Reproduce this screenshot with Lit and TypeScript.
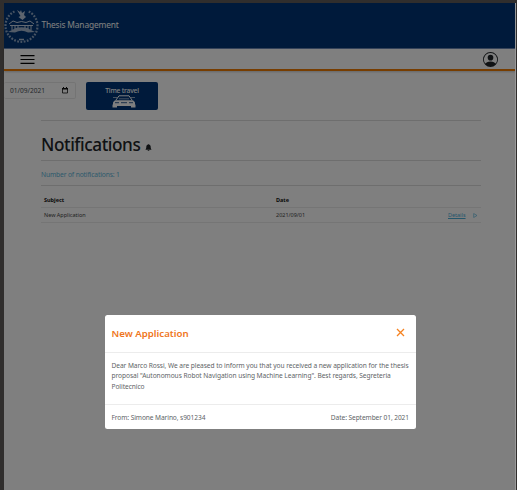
import { LitElement, html, css } from "lit";
import { customElement } from "lit/decorators.js";

@customElement("app-root")
class AppRoot extends LitElement {
  static styles = css`
    :host { display: block; height: 490px; width: 517px; overflow: hidden; box-sizing: border-box; background: #302e2d; padding: 3px 1px 0 4px; font-family: "Noto Sans", sans-serif; position: relative; }
    * { box-sizing: border-box; }
    svg { display: block; }
    .page { position: relative; height: 487px; background: #fff; }
    .brand { height: 45px; background: #003576; display: flex; align-items: center; color: #fff; font-size: 8.4px; letter-spacing: -0.15px; }
    .brand p { margin: 0 0 2px 2.5px; }
    .bar { height: 23px; border-top: 1px solid #6b87b4; border-bottom: 2px solid #ef7b00; display: flex; justify-content: space-between; align-items: center; padding: 0 18px 0 16px; box-shadow: 0 1px 2px #0003; }
    .bar svg:last-child { margin-top: 1px; }
    .tools { display: flex; height: 49px; padding-top: 11px; align-items: flex-start; }
    .date { width: 72px; height: 17px; border: 1px solid #e9e9e9; border-left: 0; border-radius: 2px; display: flex; align-items: center; justify-content: space-between; padding: 0 7px 0 6px; font-size: 6.6px; color: #495057; }
    .travel { margin-left: 10px; width: 72px; height: 28px; background: #003576; border-radius: 2px; color: #fff; font-size: 6.7px; letter-spacing: -0.2px; font-weight: 500; line-height: 9px; padding-top: 4px; display: flex; flex-direction: column; align-items: center; }
    .travel svg { margin-left: 4px; }
    main { margin: 0 35px 0 37px; border-top: 1px solid #dcdcdc; }
    .title { height: 39px; display: flex; align-items: center; }
    h1 { font-size: 17.2px; letter-spacing: -0.43px; font-weight: 500; margin: 9px 5px 0 0; line-height: 24px; color: #212529; }
    .bell { margin-top: 14px; }
    .count { border-top: 1px solid #dcdcdc; border-bottom: 1px solid #dcdcdc; height: 26px; display: flex; align-items: center; color: #5bb5d9; font-size: 6.7px; letter-spacing: -0.13px; padding-top: 2px; }
    .row { display: grid; grid-template-columns: 232px 172px 1fr; font-size: 5.5px; color: #444; height: 16px; align-items: center; padding-left: 3px; border-bottom: 1px solid #eaeaea; letter-spacing: -0.02px; }
    .head { margin-top: 6px; font-weight: 700; color: #111; }
    .head + .row { height: 15px; }
    .links { display: flex; align-items: center; gap: 7px; color: #4aaed9; }
    .links u { text-decoration-thickness: .6px; }
    .shade { position: absolute; inset: 0; right: 1px; background: rgba(0,0,0,.5); }
    .edge { position: absolute; right: 0; top: 0; bottom: 0; width: 1px; background: #999; }
    .modal { position: absolute; left: 105px; top: 315px; width: 311px; height: 114px; background: #fff; border-radius: 2.5px; color: #606366; font-size: 6.6px; letter-spacing: -0.052px; }
    .mhead { height: 37px; display: flex; justify-content: space-between; align-items: center; padding: 0 11px 0 6.5px; color: #ef7622; font-size: 9.7px; letter-spacing: 0; font-weight: 600; }
    .mhead svg { margin-bottom: 2px; }
    .mbody { height: 53px; border-top: 1px solid #ececec; border-bottom: 1px solid #ececec; padding: 8px 0 0 6.5px; line-height: 10.3px; }
    .mbody div { white-space: nowrap; }
    .foot { height: 24px; display: flex; justify-content: space-between; align-items: center; padding: 1px 7px 0 6.5px; letter-spacing: -0.08px; }
  `;

  lines = [
    "Dear Marco Rossi, We are pleased to inform you that you received a new application for the thesis",
    "proposal \"Autonomous Robot Navigation using Machine Learning\". Best regards, Segreteria",
    "Politecnico",
  ];

  crest() {
    return html`<svg width="35" height="35" viewBox="0 0 35 35" fill="none" stroke="#dce3ee">
      <path d="M10.5 3.4A16 16 0 1 0 24.5 3.4" stroke-width="2.200" stroke-dasharray="1.800 1.400" opacity=".65" />
      <path d="M13 2l3 2 1-2 1 3 3-2-1 4 2 2-3.500 3-4-3 2-1z" fill="#dce3ee" stroke="none" opacity=".85" />
      <path d="M5 16l4-3 4 1.500 4.500-1 4.500 1 4-1.500 4 3M6 17.500h23M8 18v4M11 18v3M14 18v2M21 18v2M24 18v3M27 18v4" stroke-width="1" opacity=".9" />
      <path d="M4 24l8-4q5.500-1.500 11 0l8 4-7 .5q-6.500-3.500-13 0z" fill="#dce3ee" stroke="none" opacity=".75" />
      <path d="M15 31.500h5" stroke-width="1.500" opacity=".8" />
    </svg>`;
  }

  render() {
    return html`
      <div class="page">
        <div class="brand">${this.crest()}<p>Thesis Management</p></div>
        <div class="bar">
          <svg width="15" height="9" viewBox="0 0 15 9" stroke="#000" stroke-width="1.200"><path d="M.5 .7h14M.5 4.500h14M.5 8.300h14" /></svg>
          <svg width="15" height="15" viewBox="0 0 16 16" fill="#212529">
            <path d="M11 6a3 3 0 1 1-6 0 3 3 0 0 1 6 0z" />
            <path fill-rule="evenodd" d="M0 8a8 8 0 1 1 16 0A8 8 0 0 1 0 8zm8-7a7 7 0 0 0-5.468 11.370C3.242 11.226 4.805 10 8 10s4.757 1.225 5.468 2.370A7 7 0 0 0 8 1z" />
          </svg>
        </div>
        <div class="tools">
          <div class="date">01/09/2021
            <svg width="6" height="7" viewBox="0 0 6 7"><path d="M.5 1.500h5v4.500h-5z" fill="none" stroke="#111" stroke-width=".8" /><path d="M0 1h6v1.500H0zM1 0h1v1H1zM4 0h1v1H4z" fill="#111" /></svg>
          </div>
          <div class="travel">Time travel
            <svg width="24" height="13" viewBox="0 0 24 13" fill="none" stroke="#fff">
              <path d="M4 5l3-4.200h10l3 4.200" stroke-width="1" />
              <path d="M1 2.500h4M19 2.500h4M7 3.800h10" stroke-width=".8" opacity=".7" />
              <path d="M3 5.200h18l2 2V10H1V7.200z" fill="#fff" stroke="none" />
              <path d="M3 7.700h4M17 7.700h4M9 7.700h6" stroke="#003576" stroke-width=".8" />
              <path d="M.5 9.500v3H5v-1.500h14v1.500h4.500v-3z" fill="#fff" stroke="none" />
            </svg>
          </div>
        </div>
        <main>
          <div class="title"><h1>Notifications</h1>
            <svg class="bell" width="7" height="7" viewBox="0 0 16 16" fill="#212529"><path d="M8 16a2 2 0 0 0 2-2H6a2 2 0 0 0 2 2zM8 0a1 1 0 0 0-1 1C4.700 1.500 3 3.500 3 6c0 2-.5 5-2 7h14c-1.500-2-2-5-2-7 0-2.500-1.700-4.500-4-5a1 1 0 0 0-1-1z" /></svg>
          </div>
          <div class="count">Number of notifications: 1</div>
          <div class="row head"><span>Subject</span><span>Date</span></div>
          <div class="row"><span>New Application</span><span>2021/09/01</span>
            <span class="links"><u>Details</u><svg width="5" height="5" viewBox="0 0 5 5" fill="none" stroke="#4aaed9" stroke-width=".6"><path d="M.7 .5l3.300 2-3.300 2z" /></svg></span>
          </div>
        </main>
        <div class="shade"></div>
        <div class="edge"></div>
      </div>
      <section class="modal">
        <div class="mhead"><span>New Application</span><svg width="9" height="9" viewBox="0 0 9 9" stroke="#f58220" stroke-width="1.300"><path d="M1 1l7 7M8 1l-7 7" /></svg></div>
        <div class="mbody">${this.lines.map((l) => html`<div>${l}</div>`)}</div>
        <div class="foot"><span>From: Simone Marino, s901234</span><span>Date: September 01, 2021</span></div>
      </section>`;
  }
}
